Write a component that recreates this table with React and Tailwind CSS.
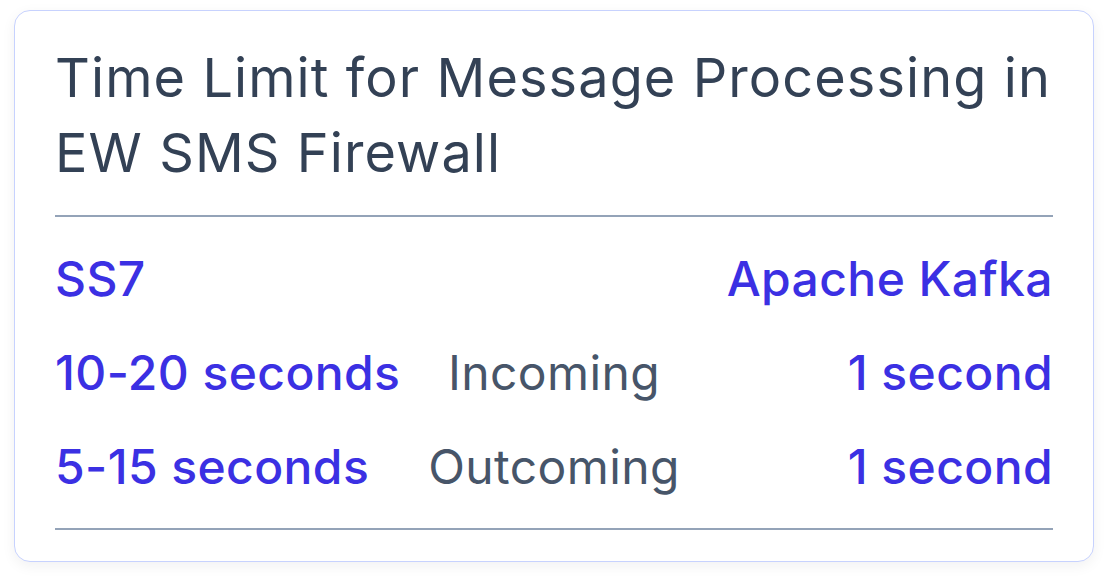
import React from 'react';

const rows = [
    { left: '10-20 seconds', mid: 'Incoming', right: '1 second' },
    { left: '5-15 seconds', mid: 'Outcoming', right: '1 second' },
];

const App = () => {
    return (
        <div className="w-[1108px] h-[582px] bg-white pt-[10px] px-[14px]" style={{ fontFamily: 'Inter, "Noto Sans", sans-serif' }}>
            <div className="h-[552px] rounded-[16px] border border-[#c7d2fe] bg-white shadow-[0_4px_14px_rgba(15,23,42,0.06)] px-[40px] pt-[29px]">
                <h1 className="text-[54px] leading-[75px] font-normal text-[#334155] tracking-[1.1px]">
                    Time Limit for Message Processing in EW SMS Firewall
                </h1>
                <div className="mt-[25px] h-[2px] bg-[#94a3b8]" />
                <div className="grid grid-cols-[1fr_auto_1fr] text-[48px] leading-[94px] whitespace-nowrap pt-[15px] tracking-[0.4px]">
                    <div className="font-medium text-[#3b30e3]">SS7</div>
                    <div />
                    <div className="font-medium text-[#3b30e3] text-right">Apache Kafka</div>
                    {rows.map((r, i) => (
                        <React.Fragment key={i}>
                            <div className="font-medium text-[#3b30e3]">{r.left}</div>
                            <div className="text-center text-[#475569]">{r.mid}</div>
                            <div className="font-medium text-[#3b30e3] text-right">{r.right}</div>
                        </React.Fragment>
                    ))}
                </div>
                <div className="mt-[14px] h-[2px] bg-[#94a3b8]" />
            </div>
        </div>
    );
};

export default App;
